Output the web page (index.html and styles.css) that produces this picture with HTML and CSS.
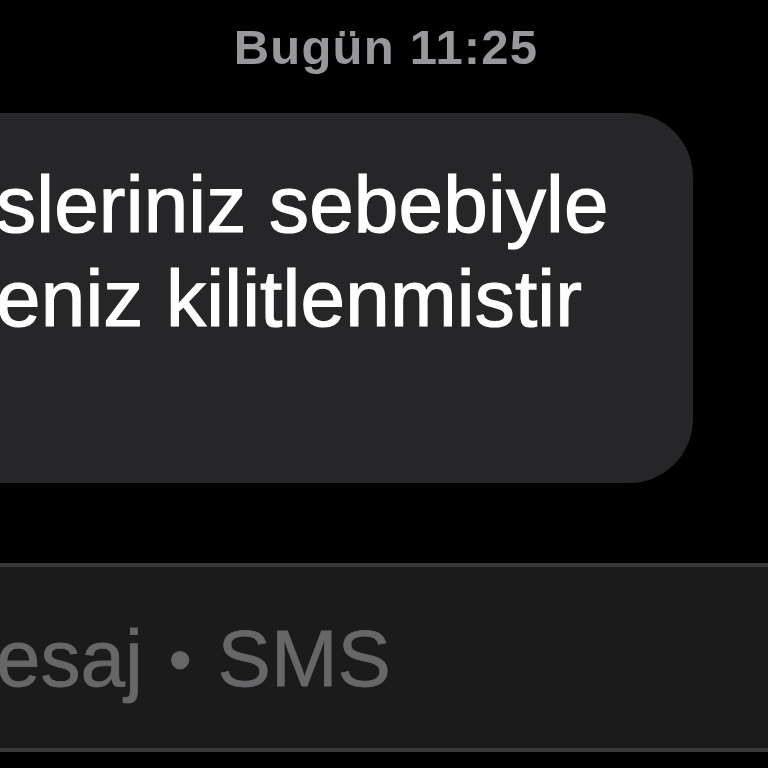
FILE: index.html
```
<!DOCTYPE html>
<html lang="tr">
<head>
<meta charset="utf-8">
<title>Mesajlar</title>
<link rel="stylesheet" href="styles.css">
</head>
<body>
<main class="screen">
  <div class="timestamp">Bugün 11:25</div>
  <div class="bubble">
    <p class="bubble-text">sleriniz sebebiyle<br>eniz kilitlenmistir<br>&nbsp;</p>
  </div>
  <div class="composer">
    <span class="placeholder">esaj <span class="dot">•</span> SMS</span>
  </div>
</main>
</body>
</html>
```
FILE: styles.css
```
html, body {
  margin: 0;
  padding: 0;
  background: #000;
}
body {
  width: 768px;
  height: 768px;
  overflow: hidden;
  font-family: "Liberation Sans", Arial, sans-serif;
}
.screen {
  display: flex;
  flex-direction: column;
  width: 768px;
}
.timestamp {
  padding-top: 18px;
  text-align: center;
  font-size: 49px;
  line-height: 58px;
  font-weight: 700;
  letter-spacing: 1.2px;
  color: #98989c;
  padding-left: 4px;
}
.bubble {
  margin-top: 37px;
  margin-left: -200px;
  width: 893px;
  box-sizing: border-box;
  background: #262628;
  border-radius: 64px;
  padding: 45px 0 43px 196px;
}
.bubble-text {
  margin: 0;
  font-size: 80px;
  line-height: 94px;
  letter-spacing: 0.2px;
  color: #fff;
  -webkit-text-stroke: 1.2px #fff;
  white-space: nowrap;
}
.composer {
  margin-top: 80px;
  margin-left: -100px;
  width: 968px;
  box-sizing: border-box;
  background: #1b1b1b;
  border-top: 4px solid #38383a;
  border-bottom: 4px solid #38383a;
  padding: 42px 0 38px 96px;
}
.placeholder {
  display: block;
  font-size: 80px;
  line-height: 100px;
  color: #67676a;
  -webkit-text-stroke: 0.8px #67676a;
  white-space: nowrap;
}
.dot {
  font-size: 64px;
  vertical-align: 4px;
  padding: 0 4px;
}
```
